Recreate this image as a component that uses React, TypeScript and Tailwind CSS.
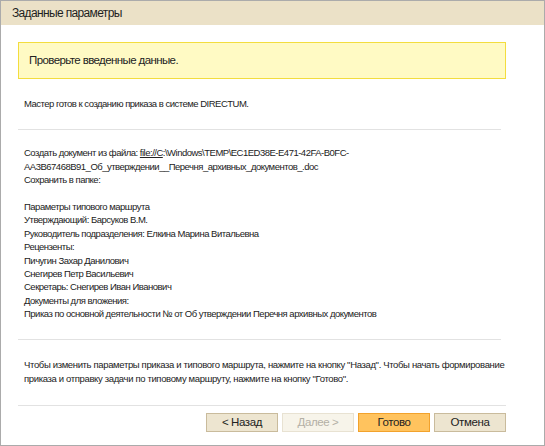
const font = { fontFamily: '"Liberation Sans", Arial, sans-serif' }

const routeLines = [
  'Параметры типового маршрута',
  'Утверждающий: Барсуков В.М.',
  'Руководитель подразделения: Елкина Марина Витальевна',
  'Рецензенты:',
  'Пичугин Захар Данилович',
  'Снегирев Петр Васильевич',
  'Секретарь: Снегирев Иван Иванович',
  'Документы для вложения:',
  'Приказ по основной деятельности № от Об утверждении Перечня архивных документов',
]

function WizardButton({ label, kind = 'default' }: { label: string; kind?: 'default' | 'disabled' | 'primary' }) {
  const styles = {
    default: 'bg-[#ede5d0] border-[#c9bb9c] text-[#222]',
    disabled: 'bg-[#f7f4ea] border-[#e8e2d2] text-[#b4b0a6]',
    primary: 'bg-[#ffc35e] border-[#f2a22c] text-[#222]',
  }[kind]
  return (
    <button className={`w-[72px] h-[19px] border text-[11.5px] tracking-[-0.4px] flex items-center justify-center ${styles}`}>
      {label}
    </button>
  )
}

export default function App() {
  return (
    <div style={font} className="w-[545px] h-[446px] bg-white border border-[#ababab] flex flex-col text-[#222]">
      {/* Header */}
      <div className="h-[24px] shrink-0 bg-[#ebe1c7] pl-[11px] flex items-center text-[12px] tracking-[-0.65px] text-[#1e1e1e]">
        Заданные параметры
      </div>

      <div className="flex-1 flex flex-col pl-[17px] pr-[43px]">
        {/* Warning */}
        <div className="mt-[17px] h-[37px] mr-[-5px] border border-[#f3dd3e] bg-[#fffac4] pl-[10px] flex items-center text-[11.5px] tracking-[-0.6px]">
          Проверьте введенные данные.
        </div>

        <div className="pl-[6px] mt-[18px] text-[9.5px] tracking-[-0.5px] leading-[13.4px]">
          Мастер готов к созданию приказа в системе DIRECTUM.
        </div>

        <div className="mt-[19px] border-t border-[#e2e2e2]" />

        <div className="pl-[6px] mt-[16px] text-[9.5px] tracking-[-0.5px] leading-[13.4px]">
          <div>
            Создать документ из файла: <span className="underline">file://C</span>:\Windows\TEMP\EC1ED38E-E471-42FA-B0FC-
            <br />
            AA3B67468B91_Об_утверждении__Перечня_архивных_документов_.doc
          </div>
          <div>Сохранить в папке:</div>
          <div className="h-[13.4px]" />
          {routeLines.map((line) => (
            <div key={line}>{line}</div>
          ))}
        </div>

        <div className="mt-[18px] border-t border-[#e2e2e2]" />

        <div className="pl-[6px] mt-[18px] text-[9.5px] tracking-[-0.35px] leading-[14px] whitespace-nowrap">
          Чтобы изменить параметры приказа и типового маршрута, нажмите на кнопку "Назад". Чтобы начать формирование
          <br />
          приказа и отправку задачи по типовому маршруту, нажмите на кнопку "Готово".
        </div>

        <div className="mt-[19px] mr-[-5px] border-t border-[#e2e2e2]" />

        <div className="mt-[7px] mr-[-5px] flex justify-end gap-[4px]">
          <WizardButton label="< Назад" />
          <WizardButton label="Далее >" kind="disabled" />
          <WizardButton label="Готово" kind="primary" />
          <WizardButton label="Отмена" />
        </div>
      </div>
    </div>
  )
}
